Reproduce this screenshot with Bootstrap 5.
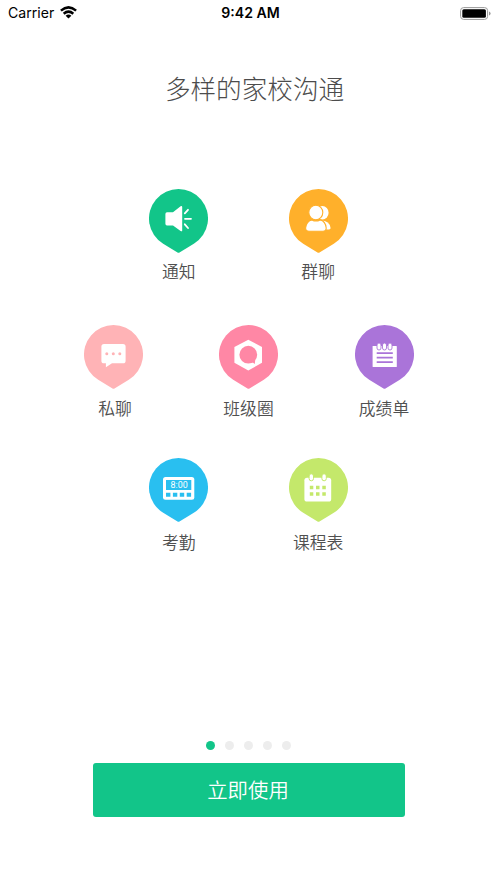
<!DOCTYPE html>
<html lang="zh-CN">
<head>
<meta charset="utf-8">
<meta name="viewport" content="width=device-width, initial-scale=1">
<title>多样的家校沟通</title>
<link href="https://cdn.jsdelivr.net/npm/bootstrap@5.3.0/dist/css/bootstrap.min.css" rel="stylesheet">
<style>
body{font-family:Inter,"Noto Sans CJK SC",sans-serif;color:#555}
.screen{height:883px}
.status{height:26px;padding:0 6px 0 8px;font-size:14.1px;color:#000;line-height:26px}
.status>div{flex:1 1 0}
.wifi{margin-left:6px;margin-top:-1px}
.clock{padding-left:2px}
.title{font-size:25.6px;line-height:36px;font-weight:300;margin:44px 0 0 12px;color:#4c4c4c;font-family:"Noto Sans CJK SC",sans-serif}
.line-a{margin-top:83px;column-gap:80.3px}
.line-b{margin-top:42px;column-gap:76.5px}
.line-c{margin-top:38px;column-gap:80.3px}
.tile{width:59px}
.pin{width:59px;height:64px;display:block}
.caption{font-family:"Noto Sans CJK SC DemiLight","Noto Sans CJK SC",sans-serif;font-size:16.8px;font-weight:350;line-height:24px;margin-top:6px;height:24px;color:#505050}
.line-b .caption{margin-top:7px}
.line-c .caption{margin-top:8px}
.dot{width:9px;height:9px;background:#ededed}
.dot.on{background:#12c589}
.dots{gap:10.2px;margin-bottom:13.5px}
.start{width:312px;height:54px;margin-bottom:66px;background:#12c589;color:#fff;border:0;border-radius:3px;font-family:"Noto Sans CJK SC DemiLight","Noto Sans CJK SC",sans-serif;font-size:20.4px;font-weight:350;padding:0 1px 2px 0}
</style>
<script src="https://cdn.jsdelivr.net/npm/bootstrap@5.3.0/dist/js/bootstrap.bundle.min.js"></script>
</head>
<body class="bg-white">
<svg width="0" height="0" class="position-absolute"><defs><path id="drop" d="M14.2 54.75A29.5 29.5 0 1 1 44.8 54.75L30.5 63.4Q29.5 64 28.5 63.4Z"/></defs></svg>
<main class="screen d-flex flex-column align-items-center overflow-hidden">
  <header class="status w-100 d-flex align-items-center">
    <div class="d-flex align-items-center"><span>Carrier</span>
      <svg class="wifi" width="17" height="13" viewBox="0 0 17 13" fill="none" stroke="#000" stroke-width="2.5"><path d="M.9 4.6Q8.5-1.9 16.1 4.6M3.7 7.7Q8.5 3.6 13.3 7.7"/><path d="M5.6 9.8Q8.5 7.4 11.4 9.8L8.5 12.6Z" fill="#000" stroke="none"/></svg></div>
    <span class="clock fw-semibold">9:42 AM</span>
    <div class="d-flex justify-content-end"><svg width="31" height="13" viewBox="0 0 31 13"><rect x=".6" y=".6" width="27" height="11.8" rx="3" fill="none" stroke="#999"/><rect x="2.3" y="2.3" width="23.6" height="8.4" rx="1.5"/><path d="M29 4.5Q30.6 5 30.6 6.5T29 8.5Z" fill="#999"/></svg></div>
  </header>
  <h1 class="title">多样的家校沟通</h1>
  <section class="line-a d-flex">
    <div class="tile d-flex flex-column align-items-center">
      <svg class="pin" viewBox="0 0 59 64"><use href="#drop" fill="#12c589"/><path d="M18 23.3H24L31.6 17.2Q33.2 16.6 33.2 18V41.4Q33.2 42.8 31.6 42L24 36.4H18Q16.4 36.4 16.4 34.8V24.9Q16.4 23.3 18 23.3Z" fill="#fff"/><path d="M35.8 24.3 39 20.8M36 29.8H42M35.8 35.3 39 39" stroke="#fff" stroke-width="1.8" stroke-linecap="round"/></svg>
      <div class="caption text-nowrap">通知</div></div>
    <div class="tile d-flex flex-column align-items-center">
      <svg class="pin" viewBox="0 0 59 64"><use href="#drop" fill="#ffb02b"/><g fill="#fff"><ellipse cx="33.4" cy="23.8" rx="6.2" ry="6.7"/><path d="M31 31.5Q40.5 31 41.6 39Q41.6 40.4 40 40.5H31Z"/><g stroke="#ffb02b" stroke-width="1.1"><ellipse cx="26.8" cy="23.5" rx="7" ry="7.3"/><path d="M23 30.9Q27 33.2 31 30.9Q36.5 32 37.2 39Q37.2 42.2 34 42.2H20Q16.6 42.2 16.6 39Q17.4 32 23 30.9Z"/></g></g></svg>
      <div class="caption text-nowrap">群聊</div></div>
  </section>
  <section class="line-b d-flex">
    <div class="tile d-flex flex-column align-items-center">
      <svg class="pin" viewBox="0 0 59 64"><use href="#drop" fill="#ffb3b6"/><path d="M20 19H39Q41.6 19 41.6 21.6V35.7Q41.6 38.3 39 38.3H28L21.9 42.3V38.3H20Q17.4 38.3 17.4 35.7V21.6Q17.4 19 20 19Z" fill="#fff"/><g fill="#ffb3b6"><circle cx="22.8" cy="28.7" r="1.5"/><circle cx="29.3" cy="28.7" r="1.5"/><circle cx="35.8" cy="28.7" r="1.5"/></g></svg>
      <div class="caption text-nowrap ps-1">私聊</div></div>
    <div class="tile d-flex flex-column align-items-center">
      <svg class="pin" viewBox="0 0 59 64"><use href="#drop" fill="#ff87a5"/><path d="M29.3 14.7 43 22.1V37.8L29.3 45.6 15.4 37.8V22.1Z" fill="#fff"/><circle cx="29.3" cy="29.7" r="8.9" fill="#ff87a5"/><path d="M32 37.2Q34.3 37.2 35.8 38.9L36.2 35 33 34Z" fill="#ff87a5"/></svg>
      <div class="caption text-nowrap">班级圈</div></div>
    <div class="tile d-flex flex-column align-items-center">
      <svg class="pin" viewBox="0 0 59 64"><use href="#drop" fill="#aa74d9"/><rect x="17.6" y="21" width="24.2" height="21" rx=".6" fill="#fff"/><path d="M21.7 28.1H37.8M21.7 32.6H37.8M21.7 37.1H37.8" stroke="#aa74d9" stroke-width="1.8"/><g fill="#fff" stroke="#aa74d9" stroke-width=".9"><rect x="22" y="18" width="4" height="7" rx="2"/><rect x="27.5" y="18" width="4" height="7" rx="2"/><rect x="33" y="18" width="4" height="7" rx="2"/></g></svg>
      <div class="caption text-nowrap">成绩单</div></div>
  </section>
  <section class="line-c d-flex">
    <div class="tile d-flex flex-column align-items-center">
      <svg class="pin" viewBox="0 0 59 64"><use href="#drop" fill="#29bff0"/><rect x="14" y="19" width="31.3" height="22.7" rx="2.5" fill="#fff"/><g fill="#29bff0"><path d="M17 22H42.3V32H17Z"/><path d="M17 34.7h4.4v4H17zM23.9 34.7h4.4v4h-4.4zM30.8 34.7h4.4v4h-4.4zM37.7 34.7h4.4v4h-4.4z"/></g><text x="21.6" y="30.3" font-size="9.4" textLength="17.2" lengthAdjust="spacingAndGlyphs" font-family="Roboto,sans-serif" fill="#fff">8:00</text></svg>
      <div class="caption text-nowrap">考勤</div></div>
    <div class="tile d-flex flex-column align-items-center">
      <svg class="pin" viewBox="0 0 59 64"><use href="#drop" fill="#c4e86b"/><rect x="15.4" y="19.7" width="26.8" height="23.8" rx="2.6" fill="#fff"/><g fill="#fff" stroke="#c4e86b" stroke-width="1"><rect x="20.1" y="15.8" width="4.4" height="7" rx="2.2"/><rect x="32.9" y="15.8" width="4.4" height="7" rx="2.2"/></g><path d="M20.8 27.8h3.5v3.4h-3.5zM27 27.8h3.5v3.4H27zM33.3 27.8h3.5v3.4h-3.5zM20.8 34.3h3.5v3.4h-3.5zM27 34.3h3.5v3.4H27zM33.3 34.3h3.5v3.4h-3.5z" fill="#c4e86b"/></svg>
      <div class="caption text-nowrap">课程表</div></div>
  </section>
  <div class="dots d-flex mt-auto"><span class="dot on rounded-circle"></span><span class="dot rounded-circle"></span><span class="dot rounded-circle"></span><span class="dot rounded-circle"></span><span class="dot rounded-circle"></span></div>
  <button type="button" class="start btn flex-shrink-0">立即使用</button>
</main>
</body>
</html>
